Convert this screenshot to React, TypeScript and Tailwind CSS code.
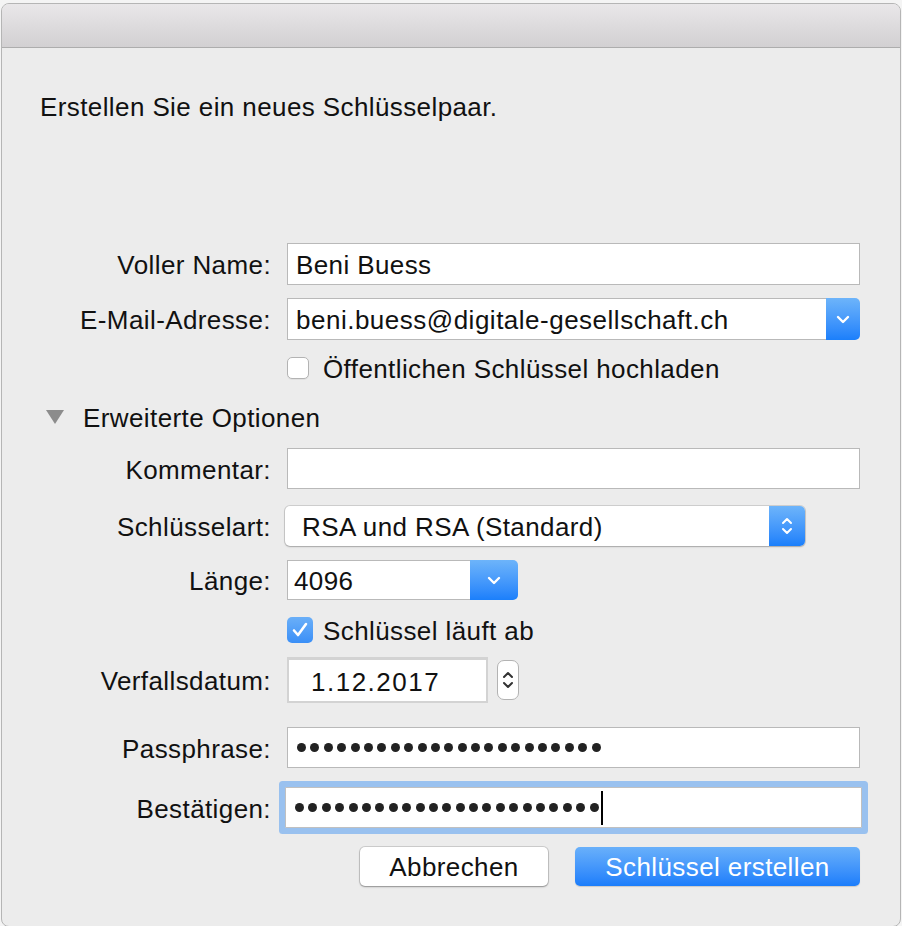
import React from "react";

const font = { fontFamily: '"Liberation Sans", Arial, sans-serif' };

function ChevronDown({ className = "" }: { className?: string }) {
  return (
    <svg className={className} width="14" height="9" viewBox="0 0 14 9" fill="none">
      <path d="M2 2l5 5 5-5" stroke="white" strokeWidth="2.4" strokeLinecap="round" strokeLinejoin="round" />
    </svg>
  );
}

function UpDown({ color = "white", className = "" }: { color?: string; className?: string }) {
  return (
    <svg className={className} width="14" height="24" viewBox="0 0 14 24" fill="none">
      <path d="M3 9l4-4 4 4" stroke={color} strokeWidth="2" strokeLinecap="round" strokeLinejoin="round" />
      <path d="M3 15l4 4 4-4" stroke={color} strokeWidth="2" strokeLinecap="round" strokeLinejoin="round" />
    </svg>
  );
}

function Label({ children }: { children: React.ReactNode }) {
  return <div className="w-[269px] shrink-0 pt-[3px] text-right text-[26px] tracking-[0.4px] text-[#111]">{children}</div>;
}

function Dots({ count }: { count: number }) {
  return (
    <div className="flex gap-[4.4px]">
      {Array.from({ length: count }).map((_, i) => (
        <span key={i} className="block w-[9px] h-[9px] rounded-full bg-[#222]" />
      ))}
    </div>
  );
}

export default function App() {
  return (
    <div className="w-[902px] h-[926px] bg-[#f4f4f4] overflow-hidden" style={font}>
      <div className="ml-[1px] mt-[3px] w-[900px] h-[924px] rounded-[8px] border border-[#b5b5b5] bg-[#ececec] overflow-hidden">
        {/* title bar */}
        <div className="h-[44px] bg-gradient-to-b from-[#e9e7e9] to-[#d2d0d2] border-b border-[#adadad]" />

        <div className="mt-[45px] h-[28px] leading-[28px] pl-[38px] text-[26px] tracking-[0.4px] text-[#111]">
          Erstellen Sie ein neues Schlüsselpaar.
        </div>

        {/* Voller Name */}
        <div className="mt-[122px] flex items-center h-[42px]">
          <Label>Voller Name:</Label>
          <div className="ml-[16px] w-[573px] h-[42px] bg-white border border-[#b9b9b9] flex items-center pl-[8px] pt-[3px] text-[26px] tracking-[0.4px] text-[#111]">
            Beni Buess
          </div>
        </div>

        {/* E-Mail */}
        <div className="mt-[13px] flex items-center h-[42px]">
          <Label>E-Mail-Adresse:</Label>
          <div className="ml-[16px] w-[573px] h-[42px] flex">
            <div className="flex-1 bg-white border border-[#b9b9b9] border-r-0 flex items-center pl-[8px] pt-[3px] text-[26px] tracking-[0.5px] text-[#111]">
              beni.buess@digitale-gesellschaft.ch
            </div>
            <div className="w-[34px] rounded-r-[5px] bg-gradient-to-b from-[#6db4fa] to-[#1a7ffb] flex items-center justify-center">
              <ChevronDown />
            </div>
          </div>
        </div>

        {/* checkbox */}
        <div className="mt-[14px] flex items-center h-[28px]">
          <div className="ml-[285px] w-[22px] h-[22px] rounded-[5px] bg-white border border-[#b3b3b3] shadow-[0_1px_0_rgba(0,0,0,0.05)]" />
          <div className="ml-[14px] pt-[2px] text-[26px] tracking-[0.4px] text-[#111]">Öffentlichen Schlüssel hochladen</div>
        </div>

        {/* Erweiterte Optionen */}
        <div className="mt-[21px] flex items-center h-[28px]">
          <svg className="ml-[44px]" width="18" height="14" viewBox="0 0 18 14">
            <path d="M0 0h18L9 14z" fill="#8c8c8c" />
          </svg>
          <div className="ml-[19px] pt-[2px] text-[26px] tracking-[0.4px] text-[#111]">Erweiterte Optionen</div>
        </div>

        {/* Kommentar */}
        <div className="mt-[17px] flex items-center h-[41px]">
          <Label>Kommentar:</Label>
          <div className="ml-[16px] w-[573px] h-[41px] bg-white border border-[#b9b9b9]" />
        </div>

        {/* Schlüsselart */}
        <div className="mt-[17px] flex items-center h-[40px]">
          <Label>Schlüsselart:</Label>
          <div className="ml-[14px] w-[520px] h-[40px] flex rounded-[5px] bg-white shadow-[0_0_0_1px_rgba(0,0,0,0.12),0_1px_2px_rgba(0,0,0,0.2)]">
            <div className="flex-1 flex items-center pl-[17px] pt-[2px] text-[26px] tracking-[0.4px] text-[#111]">RSA und RSA (Standard)</div>
            <div className="w-[36px] rounded-r-[5px] bg-gradient-to-b from-[#6db4fa] to-[#1a7ffb] flex items-center justify-center">
              <UpDown />
            </div>
          </div>
        </div>

        {/* Länge */}
        <div className="mt-[14px] flex items-center h-[40px]">
          <Label>Länge:</Label>
          <div className="ml-[16px] w-[231px] h-[40px] flex">
            <div className="flex-1 bg-white border border-[#b9b9b9] border-r-0 flex items-center pl-[6px] pt-[3px] text-[26px] tracking-[0.4px] text-[#111]">
              4096
            </div>
            <div className="w-[48px] rounded-r-[5px] bg-gradient-to-b from-[#6db4fa] to-[#1a7ffb] flex items-center justify-center">
              <ChevronDown />
            </div>
          </div>
        </div>

        {/* Schlüssel läuft ab */}
        <div className="mt-[16px] flex items-center h-[28px]">
          <div className="ml-[285px] w-[26px] h-[26px] rounded-[5px] bg-gradient-to-b from-[#6aaff8] to-[#3a8ff7] flex items-center justify-center">
            <svg width="18" height="16" viewBox="0 0 18 16" fill="none">
              <path d="M3 8.5l4 4.5 8-11" stroke="white" strokeWidth="2.6" strokeLinecap="round" strokeLinejoin="round" />
            </svg>
          </div>
          <div className="ml-[10px] pt-[2px] text-[26px] tracking-[0.4px] text-[#111]">Schlüssel läuft ab</div>
        </div>

        {/* Verfallsdatum */}
        <div className="mt-[13px] flex items-center h-[46px]">
          <Label>Verfallsdatum:</Label>
          <div className="ml-[16px] w-[201px] h-[46px] bg-white border-2 border-t-[3px] border-[#d3d3d3] flex items-center pl-[22px] text-[26px] tracking-[1.5px] text-[#111] pt-[4px]">
            1.12.2017
          </div>
          <div className="ml-[9px] w-[22px] h-[40px] rounded-[7px] bg-white border border-[#b3b3b3] flex items-center justify-center">
            <UpDown color="#333" />
          </div>
        </div>

        {/* Passphrase */}
        <div className="mt-[24px] flex items-center h-[41px]">
          <Label>Passphrase:</Label>
          <div className="ml-[16px] w-[573px] h-[41px] bg-white border border-[#b9b9b9] flex items-center pl-[9px]">
            <Dots count={23} />
          </div>
        </div>

        {/* Bestätigen */}
        <div className="mt-[19px] flex items-center h-[41px]">
          <Label>Bestätigen:</Label>
          <div className="ml-[14px] w-[577px] h-[41px] bg-white border border-[#c0c0c0] flex items-center pl-[9px] rounded-[1px] shadow-[0_0_0_6px_#99c1ef]">
            <Dots count={23} />
            <span className="ml-[2px] block w-[2px] h-[34px] bg-black" />
          </div>
        </div>

        {/* Buttons */}
        <div className="mt-[19px] flex h-[39px]">
          <div className="ml-[358px] w-[188px] h-[39px] rounded-[5px] bg-white shadow-[0_0_0_1px_rgba(0,0,0,0.13),0_1px_2px_rgba(0,0,0,0.3)] flex items-center justify-center pt-[2px] text-[26px] tracking-[0.4px] text-[#111]">
            Abbrechen
          </div>
          <div className="ml-[27px] w-[285px] h-[39px] rounded-[5px] bg-gradient-to-b from-[#69b0fa] to-[#1a7dfb] shadow-[0_1px_1px_rgba(0,0,0,0.15)] flex items-center justify-center pt-[2px] text-[26px] tracking-[0.4px] text-white">
            Schlüssel erstellen
          </div>
        </div>
      </div>
    </div>
  );
}
